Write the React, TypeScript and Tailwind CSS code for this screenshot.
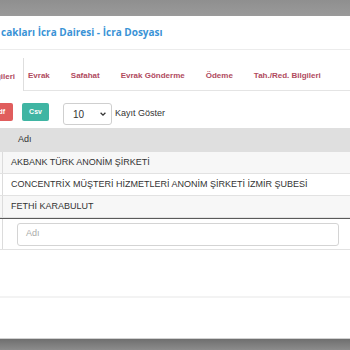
import React from "react";

const tabs = ["Evrak", "Safahat", "Evrak Gönderme", "Ödeme", "Tah./Red. Bilgileri"];

const rows = [
  "AKBANK TÜRK ANONİM ŞİRKETİ",
  "CONCENTRİX MÜŞTERİ HİZMETLERİ ANONİM ŞİRKETİ İZMİR ŞUBESİ",
  "FETHİ KARABULUT",
];

export default function App() {
  return (
    <div className="w-[350px] h-[350px] overflow-hidden flex flex-col bg-[#959595] font-['Liberation_Sans',Arial,sans-serif]">
      {/* Backdrop strip */}
      <div className="h-[16px] shrink-0 bg-gradient-to-b from-[#8f8f8f] to-[#9a9a9a]" />

      {/* Modal */}
      <div className="flex-1 bg-white flex flex-col">
        {/* Header */}
        <div className="h-[34px] flex items-center border-b border-[#ececec] shrink-0">
          <h4 className="text-[10px] font-bold text-[#3a93d6] font-['Open_Sans',sans-serif] whitespace-nowrap leading-none pl-[1px] -mt-[1px]">
            cakları İcra Dairesi - İcra Dosyası
          </h4>
        </div>

        {/* Tabs */}
        <div className="h-[41px] flex items-end border-b border-[#e4e4e4] shrink-0">
          <div className="w-[24px] shrink-0 h-[33px] overflow-hidden flex justify-end items-center border-r border-[#dedede] bg-white -mb-px">
            <span className="shrink-0 pr-[8px] pt-[5px] text-[8px] font-bold text-[#b04a5e] whitespace-nowrap">
              Taraf Bilgileri
            </span>
          </div>
          <div className="flex items-center h-[33px] pl-[4px] pt-[5px] gap-[21px]">
            {tabs.map((t) => (
              <span key={t} className="text-[8px] font-bold text-[#b04a5e] whitespace-nowrap">
                {t}
              </span>
            ))}
          </div>
        </div>

        {/* Toolbar */}
        <div className="flex items-center mt-[12px] h-[22px] shrink-0">
          <div className="w-[13px] shrink-0 overflow-hidden flex justify-end self-start">
            <button className="shrink-0 h-[18px] px-[8px] rounded-[2px] bg-[#e05d5d] text-white text-[7px] font-bold whitespace-nowrap">
              Pdf
            </button>
          </div>
          <button className="ml-[9px] self-start h-[18px] w-[27px] rounded-[2px] bg-[#3fb5a3] text-white text-[7px] font-bold">
            Csv
          </button>
          <div className="ml-[14px] w-[49px] h-[22px] border border-[#cfcfcf] rounded-[3px] flex items-center justify-between pl-[9px] pr-[4px]">
            <span className="text-[10px] text-[#333]">10</span>
            <svg width="8" height="8" viewBox="0 0 10 10" fill="none">
              <path d="M2 3.5 5 6.5 8 3.5" stroke="#333" strokeWidth="1.6" />
            </svg>
          </div>
          <span className="ml-[3px] text-[9px] text-[#333]">Kayıt Göster</span>
        </div>

        {/* Table */}
        <div className="mt-[3px] text-[9px] text-[#333] shrink-0">
          <div className="h-[24px] flex items-center bg-[#dfdfdf]">
            <span className="pl-[18px]">Adı</span>
          </div>
          {rows.map((r, i) => (
            <div
              key={r}
              className={`h-[22px] flex items-center border-b border-[#e2e2e2] ${i % 2 === 0 ? "bg-[#f7f7f7]" : "bg-white"}`}
            >
              <div className="w-[3px] h-full border-r border-[#dcdcdc]" />
              <span className="pl-[8px] whitespace-nowrap">{r}</span>
            </div>
          ))}
          <div className="h-[32px] flex items-center border-t border-[#5a5a5a] border-b border-b-[#e2e2e2]">
            <div className="w-[3px] h-full border-r border-[#dcdcdc]" />
            <div className="ml-[14px] w-[322px] h-[23px] border border-[#d4d4d4] rounded-[3px] flex items-center pl-[8px]">
              <span className="text-[#aaa]">Adı</span>
            </div>
          </div>
        </div>

        <div className="h-[46px] shrink-0" />
        <div className="h-[2px] bg-[#f3f3f3] shrink-0" />
        <div className="flex-1" />
      </div>

      {/* Bottom backdrop */}
      <div className="h-[12px] shrink-0 border-t border-[#d0d0d0] bg-gradient-to-b from-[#6f6f6f] to-[#8c8c8c]" />
    </div>
  );
}
